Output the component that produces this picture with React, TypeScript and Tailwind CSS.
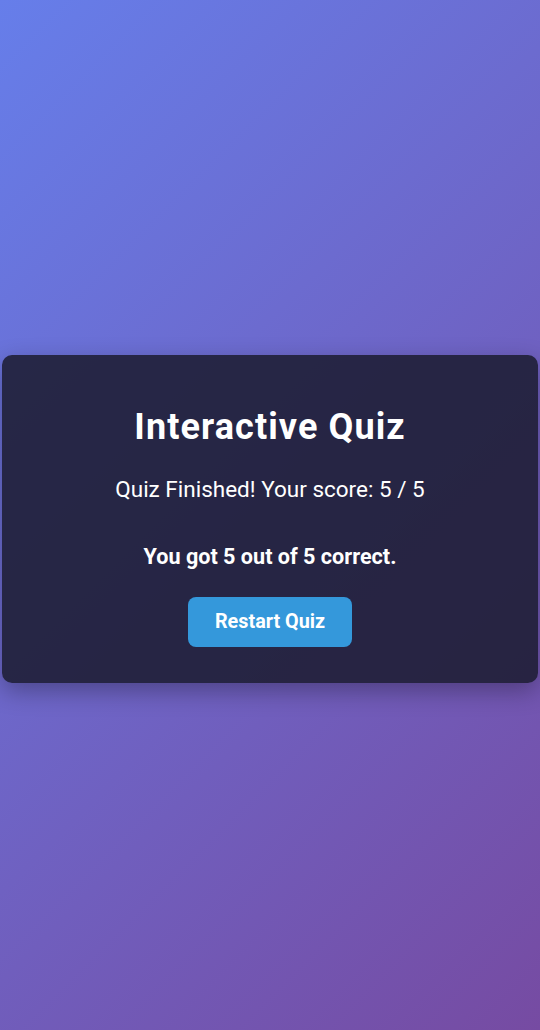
export default function App() {
    return (
        <div className="flex min-h-screen items-center justify-center bg-[linear-gradient(135deg,#667eea_0%,#764ba2_100%)] px-[2px] pt-[8px] font-['Roboto',sans-serif]">
            <div className="w-full rounded-[10px] bg-[rgba(28,28,50,0.88)] pb-[36px] pt-[50px] text-center text-white shadow-[0_8px_24px_rgba(0,0,0,0.3)]">
                <h1 className="text-[36px] font-bold leading-[44px] tracking-[1.1px]">
                    Interactive Quiz
                </h1>
                <p className="mt-[27px] text-[22.5px] leading-[26px]">
                    Quiz Finished! Your score: 5 / 5
                </p>
                <p className="mt-[42px] text-[21.6px] font-bold leading-[26px]">
                    You got 5 out of 5 correct.
                </p>
                <button className="mt-[27px] h-[50px] w-[164px] rounded-[8px] bg-[#3498db] text-[19.8px] font-bold text-white">
                    Restart Quiz
                </button>
            </div>
        </div>
    );
}
